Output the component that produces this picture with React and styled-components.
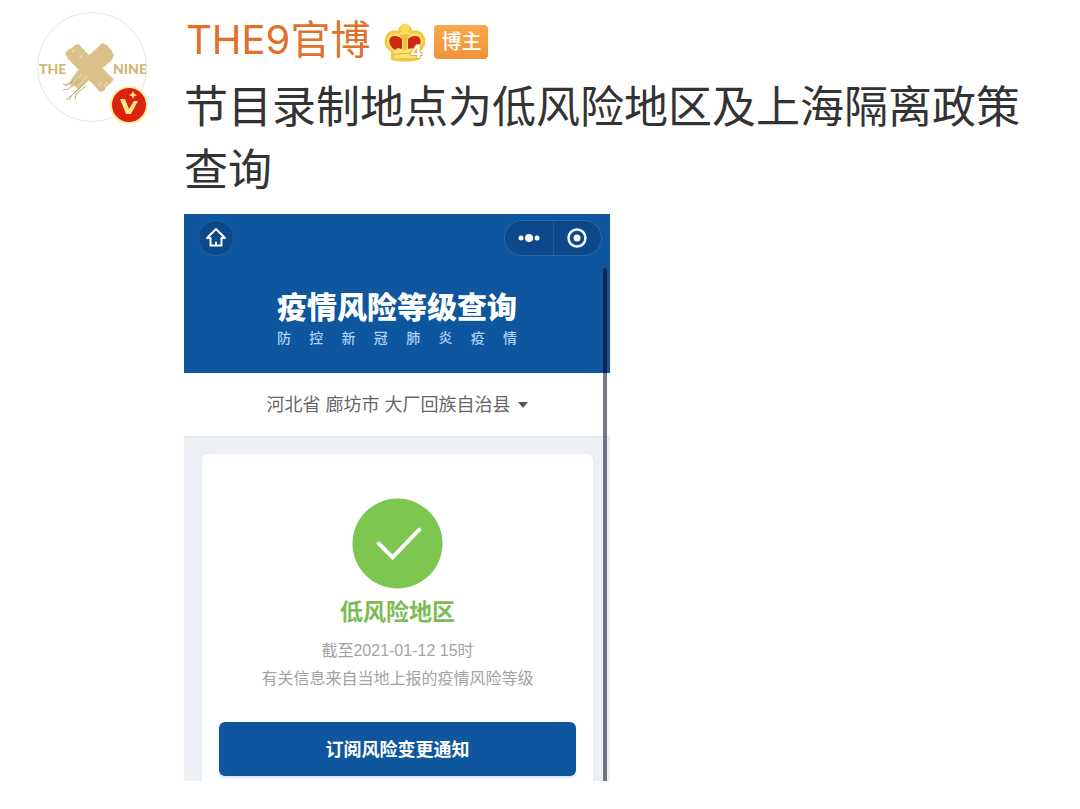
import React from "react";
import styled, { createGlobalStyle } from "styled-components";

const GlobalStyle = createGlobalStyle`
  * { box-sizing: border-box; }
  body {
    margin: 0;
    background: #fff;
    color: #333;
    font-family: "Liberation Sans", "Noto Sans CJK SC", sans-serif;
  }
  h1, h2, p { margin: 0; font-weight: 400; }
  button { font: inherit; border: 0; padding: 0; cursor: pointer; }
`;

const Post = styled.article`
  display: flex;
  align-items: flex-start;
  gap: 36px;
  padding: 12px 40px 28px 36px;
`;

const AvatarLink = styled.a`
  flex: none;
  width: 112px;
  height: 112px;
  svg { display: block; overflow: visible; }
`;

const Content = styled.div`
  flex: 1;
  min-width: 0;
`;

const AuthorRow = styled.header`
  display: flex;
  align-items: center;
  gap: 14px;
  height: 56px;
  padding-left: 2px;
`;

const AuthorName = styled.a`
  color: #e0702a;
  font-family: Inter, "Noto Sans CJK SC", sans-serif;
  font-size: 40px;
  line-height: 56px;
  text-decoration: none;
  white-space: nowrap;
`;

const Badges = styled.div`
  display: flex;
  align-items: center;
  gap: 8px;
  padding-top: 4px;
`;

const RoleTag = styled.span`
  padding: 0 7px;
  border-radius: 4px;
  background: linear-gradient(#f7a94c, #ee9336);
  color: #fff;
  font-size: 20px;
  font-weight: 500;
  line-height: 34px;
`;

const PostText = styled.p`
  margin-top: 8px;
  font-size: 44px;
  line-height: 63px;
`;

const MiniApp = styled.section`
  position: relative;
  width: 100%;
  max-width: 426px;
  margin-top: 12px;
  overflow: hidden;
  background: #edf1f6;
`;

const AppHeader = styled.header`
  padding: 6px 0 24px;
  background: #0e569e;
  color: #fff;
`;

const NavBar = styled.nav`
  display: flex;
  align-items: center;
  justify-content: space-between;
  padding: 0 8px 0 14px;
`;

const HomeButton = styled.button`
  display: grid;
  place-items: center;
  width: 36px;
  height: 36px;
  border: 1px solid #1c62a6;
  border-radius: 50%;
  background: #0c498a;
`;

const Capsule = styled.div`
  display: flex;
  width: 98px;
  height: 36px;
  border: 1px solid #2a6bac;
  border-radius: 18px;
  background: #0c498a;
`;

const CapsuleButton = styled.button`
  flex: 1;
  display: grid;
  place-items: center;
  background: none;
  & + & { border-left: 1px solid #1d5c9d; }
`;

const AppTitle = styled.h1`
  margin-top: 32px;
  font-size: 30px;
  font-weight: 900;
  line-height: 40px;
  text-align: center;
`;

const AppSubtitle = styled.p`
  width: 240px;
  margin: 0 auto 1px;
  color: #a9d4f5;
  font-size: 14px;
  font-weight: 500;
  line-height: 20px;
  text-align: justify;
  text-align-last: justify;
`;

const RegionBar = styled.div`
  display: flex;
  align-items: center;
  justify-content: center;
  gap: 6px;
  height: 64px;
  border-bottom: 1px solid #e6e8ea;
  background: #fff;
`;

const RegionSelect = styled.select`
  appearance: none;
  border: 0;
  padding: 0;
  background: none;
  color: #666;
  font: inherit;
  font-size: 18px;
  line-height: 28px;
`;

const ResultArea = styled.div`
  padding: 17px 17px 0 18px;
`;

const ResultCard = styled.div`
  display: flex;
  flex-direction: column;
  align-items: center;
  padding: 44px 17px 5px;
  border-radius: 6px 6px 0 0;
  background: #fff;
  box-shadow: 0 0 3px #dfe5eb;
`;

const RiskLevel = styled.h2`
  margin-top: 7px;
  color: #7dbb55;
  font-size: 23px;
  font-weight: 700;
  line-height: 32px;
`;

const Notes = styled.div`
  margin-top: 9px;
  color: #a3a3a3;
  font-size: 16px;
  line-height: 28px;
  text-align: center;
`;

const SubscribeButton = styled.button`
  width: 100%;
  height: 54px;
  margin-top: 29px;
  && { padding-bottom: 3px; }
  border-radius: 6px;
  background: #0e569e;
  color: #fff;
  && { font-size: 18px; font-weight: 700; }
  box-shadow: 0 2px 3px #d5e5f5;
`;

const ScrollThumb = styled.span`
  position: absolute;
  top: 54px;
  right: 3px;
  bottom: 0;
  width: 4px;
  border-radius: 2px 2px 0 0;
  background: rgba(0, 0, 20, 0.52);
`;

function Avatar() {
  return (
    <svg width="112" height="112" viewBox="0 0 112 112" role="img" aria-label="THE9">
      <circle cx="56" cy="55" r="54.5" fill="#fff" stroke="#e6e6e6" />
      <g fill="#d9c189">
        <path d="m29 41 3-3 4-2 3-3 4-1 4 5 9 9 9 8 7 8 6 5-3 4-4 3-3 5-4 1-7-8-9-8-8-9-8-8z" />
        <path d="m54 42 6-5 6-6 5 2 4 5 3 5-2 5-7 6-7 6-8 7-6 6-6 4-4-4-4 1 1-6z" />
      </g>
      <g fill="none" stroke="#c4ad76" strokeWidth="1">
        <path d="m42 66-12 7-3-1m19-4-14 9-5 1m22-7-13 12-6 5m16-14-10 9-3 5m17-14-10 8-1 5m4-22-13 9" />
      </g>
      <g fill="none" stroke="#fff" strokeWidth="1" opacity=".6">
        <path d="m46 62-9 8m14-6-9 10M63 74l3-4m2 5 3-5M36 40l3-2m5 8 2-3" />
      </g>
      <g fill="#d0b777" fontFamily="Lato, sans-serif" fontWeight="900" fontSize="14">
        <text x="3" y="62">THE</text>
        <text x="77" y="62">NINE</text>
      </g>
      <circle cx="93" cy="93" r="19" fill="#fdeb9c" />
      <circle cx="93" cy="93" r="17" fill="#d92210" />
      <path d="M84 87h5l4 10 5-8h4l-7 13h-5z" fill="#ffe784" />
      <path d="m97 79 1.300 2.700L101 83l-2.700 1.300L97 87l-1.300-2.700L93 83l2.700-1.300z" fill="#ffe784" />
    </svg>
  );
}

function Crown() {
  return (
    <svg width="42" height="42" viewBox="0 0 42 42" role="img" aria-label="4">
      <path
        d="M7 39v-8C1 27-1 21 2 15c2-5 7-7 12-5a7 7 0 1 1 14 0c5-2 10 0 12 5 3 6 1 12-5 16v8c-8 2-20 2-28 0z"
        fill="#f5c63a"
      />
      <path
        d="M10 31C4 27 2 21 4 17c2-5 7-6 11-4l3-3h6l3 3c4-2 9-1 11 4 2 4 0 10-6 14v6H10z"
        fill="#fbe27a"
      />
      <path d="M11 29c-6-4-7-10-4-13 3-2 8-1 11 2v10c-3-1-5-1-7 1zM31 29c6-4 7-10 4-13-3-2-8-1-11 2v10c3-1 5-1 7 1z" fill="#cb2a10" />
      <path d="M14 14c4-1 10-1 14 0-3 1-5 3-5 6v9h-4v-9c0-3-2-5-5-6z" fill="#f3c03c" />
      <circle cx="21" cy="7" r="4.500" fill="#fbdc62" />
      <path d="M10 34c7-2 15-2 22 0" fill="none" stroke="#e6ae2c" />
      <text x="27" y="37" fill="#fff" stroke="#eeb43c" strokeWidth="2" paintOrder="stroke" fontFamily="Liberation Sans, sans-serif" fontWeight="700" fontSize="19">4</text>
    </svg>
  );
}

export default function App() {
  return (
    <>
      <GlobalStyle />
      <Post>
        <AvatarLink href="#profile">
          <Avatar />
        </AvatarLink>
        <Content>
          <AuthorRow>
            <AuthorName href="#profile">THE9官博</AuthorName>
            <Badges>
              <Crown />
              <RoleTag>博主</RoleTag>
            </Badges>
          </AuthorRow>
          <PostText>节目录制地点为低风险地区及上海隔离政策查询</PostText>
          <MiniApp>
            <AppHeader>
              <NavBar>
                <HomeButton aria-label="首页">
                  <svg width="22" height="22" viewBox="0 0 22 22" fill="none" stroke="#fff" strokeWidth="2" strokeLinejoin="round" strokeLinecap="round">
                    <path d="m11 2-9 9h3.500v7.500h11V11H20z" />
                    <path d="M11 15.500v3" />
                  </svg>
                </HomeButton>
                <Capsule>
                  <CapsuleButton aria-label="更多">
                    <svg width="24" height="10" viewBox="0 0 24 10" fill="#fff">
                      <circle cx="4" cy="5" r="2.500" />
                      <circle cx="12" cy="5" r="4" />
                      <circle cx="20" cy="5" r="2.500" />
                    </svg>
                  </CapsuleButton>
                  <CapsuleButton aria-label="关闭">
                    <svg width="22" height="22" viewBox="0 0 22 22">
                      <circle cx="11" cy="11" r="8.500" fill="none" stroke="#fff" strokeWidth="2.500" />
                      <circle cx="11" cy="11" r="3.500" fill="#fff" />
                    </svg>
                  </CapsuleButton>
                </Capsule>
              </NavBar>
              <AppTitle>疫情风险等级查询</AppTitle>
              <AppSubtitle>防控新冠肺炎疫情</AppSubtitle>
            </AppHeader>
            <RegionBar>
              <RegionSelect aria-label="地区" defaultValue="dachang">
                <option value="dachang">河北省 廊坊市 大厂回族自治县</option>
              </RegionSelect>
              <svg width="10" height="6" viewBox="0 0 10 6" aria-hidden="true">
                <path d="M0 0h10L5 6z" fill="#555" />
              </svg>
            </RegionBar>
            <ResultArea>
              <ResultCard>
                <svg width="91" height="91" viewBox="0 0 92 92" aria-hidden="true">
                  <circle cx="46" cy="46" r="45.500" fill="#7dc650" />
                  <path d="m27 46 14 14 27-28" fill="none" stroke="#fff" strokeWidth="4" strokeLinecap="round" strokeLinejoin="miter" />
                </svg>
                <RiskLevel>低风险地区</RiskLevel>
                <Notes>
                  <p>截至2021-01-12 15时</p>
                  <p>有关信息来自当地上报的疫情风险等级</p>
                </Notes>
                <SubscribeButton>订阅风险变更通知</SubscribeButton>
              </ResultCard>
            </ResultArea>
            <ScrollThumb />
          </MiniApp>
        </Content>
      </Post>
    </>
  );
}
